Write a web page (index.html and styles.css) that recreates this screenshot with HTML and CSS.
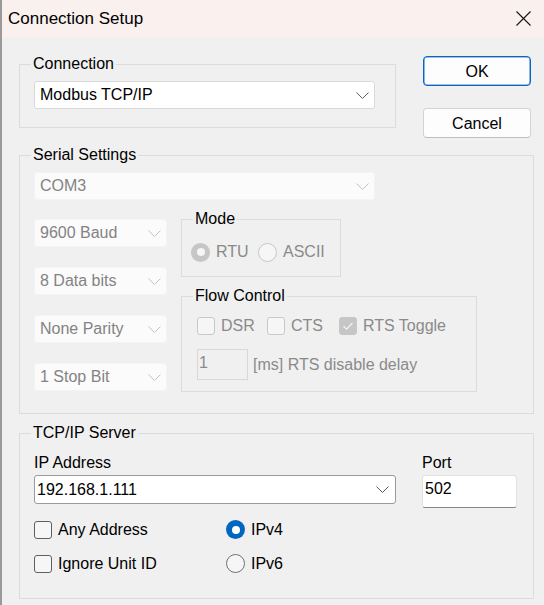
FILE: index.html
```html
<!DOCTYPE html>
<html lang="en">
<head>
<meta charset="utf-8">
<title>Connection Setup</title>
<link rel="stylesheet" href="styles.css">
</head>
<body>
<div class="window">
  <div class="titlebar">
    <span class="title">Connection Setup</span>
    <svg class="close" width="15" height="15" viewBox="0 0 15 15"><path d="M0.5 0.5 L14.5 14.5 M14.5 0.5 L0.5 14.5" stroke="#1a1a1a" stroke-width="1.2" fill="none"/></svg>
  </div>
  <div class="content">
    <div class="top-row">
      <fieldset class="group conn">
        <legend>Connection</legend>
        <div class="conn-body">
          <div class="combo wide"><span>Modbus TCP/IP</span><svg class="chev" width="13" height="7" viewBox="0 0 13 7"><path d="M0.5 0.5 L6.5 6.5 L12.5 0.5" fill="none" stroke="#5c5c5c" stroke-width="1"/></svg></div>
        </div>
      </fieldset>
      <div class="buttons">
        <button class="btn btn-default">OK</button>
        <button class="btn">Cancel</button>
      </div>
    </div>

    <fieldset class="group serial">
      <legend>Serial Settings</legend>
      <div class="serial-body">
        <div class="combo wide disabled"><span>COM3</span><svg class="chev" width="13" height="7" viewBox="0 0 13 7"><path d="M0.5 0.5 L6.5 6.5 L12.5 0.5" fill="none" stroke="#c2c2c2" stroke-width="1"/></svg></div>
        <div class="serial-row">
          <div class="serial-left">
            <div class="combo small disabled"><span>9600 Baud</span><svg class="chev" width="13" height="7" viewBox="0 0 13 7"><path d="M0.5 0.5 L6.5 6.5 L12.5 0.5" fill="none" stroke="#c2c2c2" stroke-width="1"/></svg></div>
            <div class="combo small disabled"><span>8 Data bits</span><svg class="chev" width="13" height="7" viewBox="0 0 13 7"><path d="M0.5 0.5 L6.5 6.5 L12.5 0.5" fill="none" stroke="#c2c2c2" stroke-width="1"/></svg></div>
            <div class="combo small disabled"><span>None Parity</span><svg class="chev" width="13" height="7" viewBox="0 0 13 7"><path d="M0.5 0.5 L6.5 6.5 L12.5 0.5" fill="none" stroke="#c2c2c2" stroke-width="1"/></svg></div>
            <div class="combo small disabled"><span>1 Stop Bit</span><svg class="chev" width="13" height="7" viewBox="0 0 13 7"><path d="M0.5 0.5 L6.5 6.5 L12.5 0.5" fill="none" stroke="#c2c2c2" stroke-width="1"/></svg></div>
          </div>
          <div class="serial-right">
            <fieldset class="group mode">
              <legend>Mode</legend>
              <div class="mode-body">
                <div class="opt dis"><span class="radio on-dis"></span><span>RTU</span></div>
                <div class="opt dis"><span class="radio off-dis"></span><span>ASCII</span></div>
              </div>
            </fieldset>
            <fieldset class="group flow">
              <legend>Flow Control</legend>
              <div class="flow-body">
                <div class="flow-checks">
                  <div class="opt dis"><span class="check off-dis"></span><span>DSR</span></div>
                  <div class="opt dis"><span class="check off-dis"></span><span>CTS</span></div>
                  <div class="opt dis"><span class="check on-dis"><svg width="18" height="18" viewBox="0 0 18 18"><path d="M4.5 9.2 L7.6 12.2 L13.5 6" fill="none" stroke="#f2f2f2" stroke-width="1.3"/></svg></span><span>RTS Toggle</span></div>
                </div>
                <div class="flow-delay">
                  <div class="edit-dis">1</div>
                  <span class="dis-text">[ms] RTS disable delay</span>
                </div>
              </div>
            </fieldset>
          </div>
        </div>
      </div>
    </fieldset>

    <fieldset class="group tcp">
      <legend>TCP/IP Server</legend>
      <div class="tcp-body">
        <div class="ip-row">
          <div class="field">
            <div class="field-label">IP Address</div>
            <div class="combo ip-combo"><span>192.168.1.111</span><svg class="chev" width="13" height="7" viewBox="0 0 13 7"><path d="M0.5 0.5 L6.5 6.5 L12.5 0.5" fill="none" stroke="#5c5c5c" stroke-width="1"/></svg></div>
          </div>
          <div class="field">
            <div class="field-label">Port</div>
            <div class="edit port">502</div>
          </div>
        </div>
        <div class="opts">
          <div class="opt"><span class="check off"></span><span>Any Address</span></div>
          <div class="opt"><span class="radio on"></span><span>IPv4</span></div>
          <div class="opt"><span class="check off"></span><span>Ignore Unit ID</span></div>
          <div class="opt"><span class="radio off"></span><span>IPv6</span></div>
        </div>
      </div>
    </fieldset>
  </div>
</div>
</body>
</html>
```
FILE: styles.css
```css
* { box-sizing: border-box; }
html, body { margin: 0; padding: 0; }
body {
  width: 544px;
  height: 605px;
  overflow: hidden;
  background: #f0f0f0;
  font-family: "Liberation Sans", Arial, sans-serif;
  font-size: 16px;
  color: #000;
}
.window {
  width: 544px;
  height: 605px;
  border-left: 2px solid #9a9a9a;
  background: #f0f0f0;
}
.titlebar {
  height: 37px;
  background: #faf0ee;
  display: flex;
  align-items: center;
  justify-content: space-between;
  padding: 0 13px 0 6px;
}
.title {
  font-size: 17px;
  line-height: 20px;
  color: #000;
}
.close { display: block; }

.content { padding: 18px 10px 0 17px; }

.top-row { display: flex; align-items: flex-start; }

.group {
  margin: 0;
  padding: 0;
  border: 1px solid #dcdcdc;
  min-width: 0;
}
.group > legend {
  margin-left: 11px;
  padding: 0 2px;
  line-height: 18px;
  height: 18px;
}

.conn { width: 377px; }
.conn-body { padding: 8px 20px 18px 14px; }

.buttons {
  margin-left: 27px;
  margin-top: 1px;
  width: 108px;
  display: flex;
  flex-direction: column;
  gap: 22px;
}
.btn {
  height: 30px;
  width: 108px;
  padding: 1px 0 0;
  border: 1px solid #d3d3d3;
  border-bottom-color: #bdbdbd;
  border-radius: 4px;
  background: #fdfdfd;
  font-family: inherit;
  font-size: 16px;
  line-height: 27px;
  color: #000;
}
.btn-default {
  border: 1px solid #0a66c2;
  box-shadow: inset 0 0 0 0.6px #3a86d4;
}

.combo {
  height: 28px;
  display: flex;
  align-items: center;
  justify-content: space-between;
  padding: 0 5px;
  border: 1px solid #d9d9d9;
  border-radius: 3px;
  background: #fff;
  line-height: 18px;
  white-space: nowrap;
}
.combo.wide { width: 341px; }
.combo.small { width: 133px; }
.combo.disabled {
  background: #fbfbfb;
  border-color: #f4f4f4;
  color: #838383;
}
.chev { display: block; flex: none; }

.serial { width: 515px; margin-top: 8px; }
.serial-body { padding: 8px 0 21px 14px; }
.serial-row { display: flex; gap: 14px; align-items: flex-start; }
.serial-left {
  width: 133px;
  padding-top: 19px;
  display: flex;
  flex-direction: column;
  gap: 20px;
}
.serial-right {
  padding-top: 10px;
  display: flex;
  flex-direction: column;
  align-items: flex-start;
  gap: 10px;
}
.mode { width: 160px; }
.mode-body {
  padding: 14px 0 14px 9px;
  display: grid;
  grid-template-columns: 67px auto;
  height: 48px;
}
.flow { width: 296px; }
.flow-body { padding: 12px 0 11px 15px; }
.flow-checks {
  display: grid;
  grid-template-columns: 70px 72px auto;
}
.flow-delay {
  margin-top: 14px;
  display: flex;
  align-items: center;
  gap: 5px;
}
.edit-dis {
  width: 51px;
  height: 31px;
  border: 1px solid #d8d8d8;
  background: #f0f0f0;
  padding-left: 1px;
  line-height: 26px;
  color: #8a8a8a;
}
.dis-text { color: #8a8a8a; line-height: 18px; }

.opt {
  display: flex;
  align-items: center;
  gap: 6px;
  line-height: 18px;
  white-space: nowrap;
}
.opt.dis { color: #8a8a8a; }

.check {
  width: 18px;
  height: 18px;
  flex: none;
  border-radius: 3px;
  border: 1px solid #5f5f5f;
  background: #f6f6f6;
  display: block;
}
.check svg { display: block; margin: -1px; }
.check.off-dis { border-color: #c8c8c8; background: #f6f6f6; }
.check.on-dis { border-color: #c6c6c6; background: #c6c6c6; }

.radio {
  width: 19px;
  height: 19px;
  flex: none;
  border-radius: 50%;
  display: flex;
  align-items: center;
  justify-content: center;
}
.radio.off { border: 1px solid #707070; background: #f6f6f6; }
.radio.on { background: #0067c0; }
.radio.on::after {
  content: "";
  width: 8px;
  height: 8px;
  border-radius: 50%;
  background: #fff;
}
.radio.off-dis { border: 1px solid #c8c8c8; background: #f6f6f6; }
.radio.on-dis { background: #c6c6c6; }
.radio.on-dis::after {
  content: "";
  width: 8px;
  height: 8px;
  border-radius: 50%;
  background: #f6f6f6;
}

.tcp { width: 515px; margin-top: 10px; }
.tcp-body { padding: 12px 0 25px 14px; }
.ip-row { display: flex; gap: 26px; align-items: flex-start; }
.field-label { line-height: 18px; margin-bottom: 3px; }
.ip-combo {
  width: 362px;
  height: 29px;
  padding-left: 2px;
  padding-right: 6px;
  border-color: #9a9a9a;
}
.edit {
  width: 95px;
  height: 33px;
  border: 1px solid #e2e2e2;
  border-bottom-color: #878787;
  border-radius: 3px;
  background: #fff;
  padding: 4px 2px 0;
  line-height: 18px;
}
.opts {
  margin-top: 12px;
  display: grid;
  grid-template-columns: 192px auto;
  grid-auto-rows: 19px;
  row-gap: 15px;
}
```
